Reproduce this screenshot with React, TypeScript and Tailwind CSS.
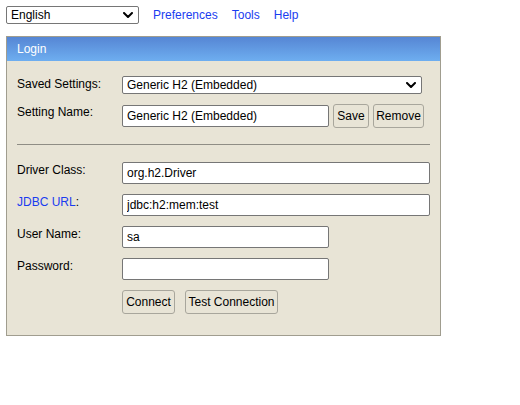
import React from "react";

const font = { fontFamily: '"Liberation Sans", Arial, sans-serif' };

function Chevron() {
  return (
    <svg viewBox="0 0 10 6" className="pointer-events-none absolute right-[6px] top-1/2 h-[6px] w-[10px] -translate-y-1/2">
      <path d="M1 1l4 4 4-4" fill="none" stroke="#000" strokeWidth="2" strokeLinecap="round" strokeLinejoin="round" />
    </svg>
  );
}

function Select({ value, width }: { value: string; width: string }) {
  return (
    <div className={`relative ${width}`}>
      <select
        defaultValue={value}
        className="block h-[18px] w-full appearance-none rounded-[2px] border border-[#767676] bg-white pl-[4px] text-[12px] leading-[16px] text-black outline-none"
      >
        <option>{value}</option>
      </select>
      <Chevron />
    </div>
  );
}

function TextInput({ value, width, type = "text" }: { value: string; width: string; type?: string }) {
  return (
    <input
      type={type}
      defaultValue={value}
      className={`block h-[22px] ${width} rounded-[2px] border border-[#767676] bg-white px-[4px] text-[12px] text-black outline-none`}
    />
  );
}

function Btn({ children, width }: { children: React.ReactNode; width: string }) {
  return (
    <button className={`block h-[24px] ${width} rounded-[3px] border border-[#a8a69c] bg-[#e8e4d6] px-0 text-[12px] text-black`}>
      {children}
    </button>
  );
}

function Row({ label, blue, children, className = "" }: { label: string; blue?: boolean; children: React.ReactNode; className?: string }) {
  return (
    <div className={`flex items-start ${className}`}>
      <div className="w-[105px] pt-[1px] text-[12px] leading-[14px] text-black">
        {blue ? (
          <>
            <span className="text-[#1a3cf0]">JDBC URL</span>:
          </>
        ) : (
          label
        )}
      </div>
      {children}
    </div>
  );
}

export default function App() {
  return (
    <div className="h-[405px] w-[520px] bg-white" style={font}>
      <div className="flex items-center pl-[6px] pt-[6px]">
        <Select value="English" width="w-[133px]" />
        <div className="ml-[14px] flex gap-[14px] text-[12px] leading-[16px] text-[#1a3cf0]">
          <span>Preferences</span>
          <span>Tools</span>
          <span>Help</span>
        </div>
      </div>

      <div className="ml-[6px] mt-[12px] w-[435px] border border-[#a09d8f] bg-[#e8e4d6]">
        <div className="flex h-[24px] items-center bg-gradient-to-b from-[#5686d4] to-[#6eaef0] pl-[10px] text-[12px] text-white">
          Login
        </div>
        <div className="px-[10px] pb-[21px] pt-[15px]">
          <Row label="Saved Settings:">
            <Select value="Generic H2 (Embedded)" width="w-[300px]" />
          </Row>
          <Row label="Setting Name:" className="mt-[10px]">
            <div className="flex items-center gap-[4px]">
              <TextInput value="Generic H2 (Embedded)" width="w-[207px]" />
              <Btn width="w-[36px]">Save</Btn>
              <Btn width="w-[51px]">Remove</Btn>
            </div>
          </Row>
          <div className="mt-[16px] h-px bg-[#8f8d85]" />
          <Row label="Driver Class:" className="mt-[17px]">
            <TextInput value="org.h2.Driver" width="w-[308px]" />
          </Row>
          <Row label="JDBC URL:" blue className="mt-[10px]">
            <TextInput value="jdbc:h2:mem:test" width="w-[308px]" />
          </Row>
          <Row label="User Name:" className="mt-[10px]">
            <TextInput value="sa" width="w-[207px]" />
          </Row>
          <Row label="Password:" className="mt-[10px]">
            <TextInput value="" type="password" width="w-[207px]" />
          </Row>
          <div className="ml-[105px] mt-[10px] flex gap-[10px]">
            <Btn width="w-[53px]">Connect</Btn>
            <Btn width="w-[93px]">Test Connection</Btn>
          </div>
        </div>
      </div>
    </div>
  );
}
